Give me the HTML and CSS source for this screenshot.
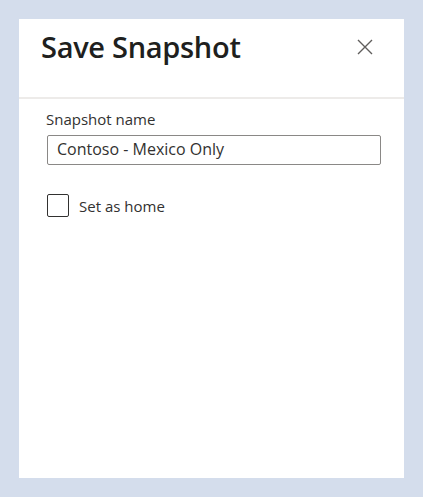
FILE: index.html
```html
<!DOCTYPE html>
<html>
<head>
<meta charset="utf-8">
<link rel="stylesheet" href="styles.css">
</head>
<body>
<div class="panel">
  <div class="header">
    <h1 class="title">Save Snapshot</h1>
    <button class="close" aria-label="Close">
      <svg width="16" height="16" viewBox="0 0 16 16"><path d="M1 1 L15 15 M15 1 L1 15" stroke="#605e5c" stroke-width="1.4" fill="none"/></svg>
    </button>
  </div>
  <div class="content">
    <label class="field-label">Snapshot name</label>
    <div class="input">Contoso - Mexico Only</div>
    <div class="check-row">
      <span class="checkbox"></span>
      <span class="check-label">Set as home</span>
    </div>
  </div>
</div>
</body>
</html>
```
FILE: styles.css
```css
html, body {
  margin: 0;
  padding: 0;
}
body {
  background: #d4ddec;
  padding: 19px 19px 19px 19px;
  width: 423px;
  height: 497px;
  box-sizing: border-box;
  font-family: "Open Sans", "Noto Sans", sans-serif;
  color: #201f1e;
}
.panel {
  background: #ffffff;
  width: 385px;
  height: 459px;
  display: flex;
  flex-direction: column;
}
.header {
  height: 78px;
  border-bottom: 2px solid #edebe9;
  display: flex;
  align-items: flex-start;
  justify-content: space-between;
  padding: 0 31px 0 22px;
  box-sizing: content-box;
}
.title {
  margin: 0;
  margin-top: 8px;
  font-size: 29px;
  font-weight: 600;
  line-height: 40px;
  letter-spacing: -0.3px;
}
.close {
  border: 0;
  background: none;
  padding: 0;
  margin-top: 20px;
  width: 16px;
  height: 16px;
  display: block;
}
.close svg { display: block; }
.content {
  padding: 10px 23px 0 28px;
  display: flex;
  flex-direction: column;
}
.field-label {
  font-size: 15px;
  line-height: 20px;
  color: #323130;
  margin-left: -1px;
}
.input {
  margin-top: 6px;
  height: 30px;
  border: 1px solid #8a8886;
  border-radius: 2px;
  box-sizing: border-box;
  padding: 0 9px;
  font-size: 16px;
  line-height: 27px;
  color: #323130;
}
.check-row {
  margin-top: 29px;
  display: flex;
  align-items: center;
  gap: 10px;
}
.checkbox {
  width: 22px;
  height: 23px;
  border: 1.5px solid #323130;
  border-radius: 2px;
  box-sizing: border-box;
}
.check-label {
  font-size: 15px;
  color: #323130;
}
```
